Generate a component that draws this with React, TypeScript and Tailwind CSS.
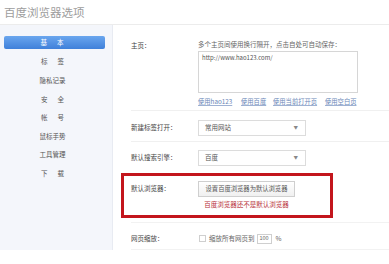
const nav = ["标签", "隐私记录", "安全", "帐号", "鼠标手势", "工具管理", "下载"];

const NavText = ({ label }: { label: string }) =>
  label.length === 2 ? (
    <span className="flex w-[23px] justify-between">
      <span>{label[0]}</span>
      <span>{label[1]}</span>
    </span>
  ) : (
    <span>{label}</span>
  );

const Select = ({ value }: { value: string }) => (
  <div className="flex h-[16px] w-[108px] items-center justify-between border border-[#dcdcdc] bg-white pl-[6px] pr-[7px] text-[6.5px] text-[#555]">
    <span>{value}</span>
    <span className="text-[4.5px] text-[#888]">▼</span>
  </div>
);

const App = () => {
  return (
    <div
      className="h-[264px] w-[389px] overflow-hidden bg-white text-[#444]"
      style={{ fontFamily: '"Noto Sans CJK SC", "Noto Sans", sans-serif' }}
    >
      <div className="h-[25px] border-b border-[#ececec] pl-[4px] pt-[4px] text-[11.5px] leading-[16px] text-[#9d9d9d]">
        百度浏览器选项
      </div>
      <div className="flex">
        <div className="h-[225px] w-[113px] border-r border-[#e8ebf2] bg-[#f4f6fb] px-[4px] pt-[11px] text-[6.5px] text-[#555]">
          <div className="mb-[4px] flex h-[13px] w-[101px] items-center justify-center rounded-[2px] bg-gradient-to-b from-[#6aa6ee] to-[#3f80da] pr-[5px] text-white">
            <NavText label="基本" />
          </div>
          {nav.map((n) => (
            <div key={n} className="flex h-[18.6px] items-center justify-center pr-[7px]">
              <NavText label={n} />
            </div>
          ))}
        </div>
        <div className="flex-1 pl-[18px] text-[6.5px]">
          <div className="flex h-[86px] border-b border-[#f0f0f0] pt-[15px]">
            <div className="w-[67px] pt-[1px] leading-[8px]">主页：</div>
            <div className="flex flex-col">
              <div className="h-[9px] text-[6.5px] leading-[8px] text-[#666]">多个主页间使用换行隔开，点击自处可自动保存：</div>
              <div className="mt-[2px] h-[42px] w-[160px] border border-[#d6d6d6] px-[3px] pt-[2px] text-[6px] leading-[8px] text-[#555]">
                http://www.hao123.com/
              </div>
              <div className="mt-[4px] flex text-[6.3px] leading-[9px] text-[#6a87b8] underline decoration-[#9fb2d3]">
                <span className="w-[43px]">使用hao123</span>
                <span className="w-[32px]">使用百度</span>
                <span className="w-[52px]">使用当前打开页</span>
                <span>使用空白页</span>
              </div>
            </div>
          </div>
          <div className="flex h-[31px] items-center border-b border-[#f0f0f0] pt-[3px]">
            <div className="w-[67px]">新建标签打开：</div>
            <Select value="常用网站" />
          </div>
          <div className="flex h-[30px] items-center pt-[1px]">
            <div className="w-[67px]">默认搜索引擎：</div>
            <Select value="百度" />
          </div>
          <div className="-ml-[10px] mt-[1px] h-[45px] w-[212px] border-[3px] border-[#c3161d] pl-[7px] pt-[5px]">
            <div className="flex items-center">
              <div className="w-[67px]">默认浏览器：</div>
              <div className="flex h-[16px] w-[97px] items-center justify-center border border-[#cfcfcf] bg-gradient-to-b from-white to-[#f0f0f0] text-[6.3px] text-[#555]">
                设置百度浏览器为默认浏览器
              </div>
            </div>
            <div className="ml-[67px] mt-[3px] w-[97px] text-center text-[6.5px] leading-[9px] text-[#b8323a]">
              百度浏览器还不是默认浏览器
            </div>
          </div>
          <div className="mt-[4px] flex h-[28px] items-center border-t border-b border-[#f2f2f2] pt-[5px]">
            <div className="w-[68px]">网页缩放：</div>
            <div className="h-[7px] w-[7px] border border-[#cfcfcf] bg-white" />
            <span className="ml-[3px] text-[#666]">缩放所有网页到</span>
            <div className="ml-[2px] flex h-[10px] w-[15px] items-center justify-center border border-[#cfcfcf] text-[5.5px] text-[#666]">100</div>
            <span className="ml-[4px] text-[#666]">%</span>
          </div>
        </div>
      </div>
    </div>
  );
};
export default App;
